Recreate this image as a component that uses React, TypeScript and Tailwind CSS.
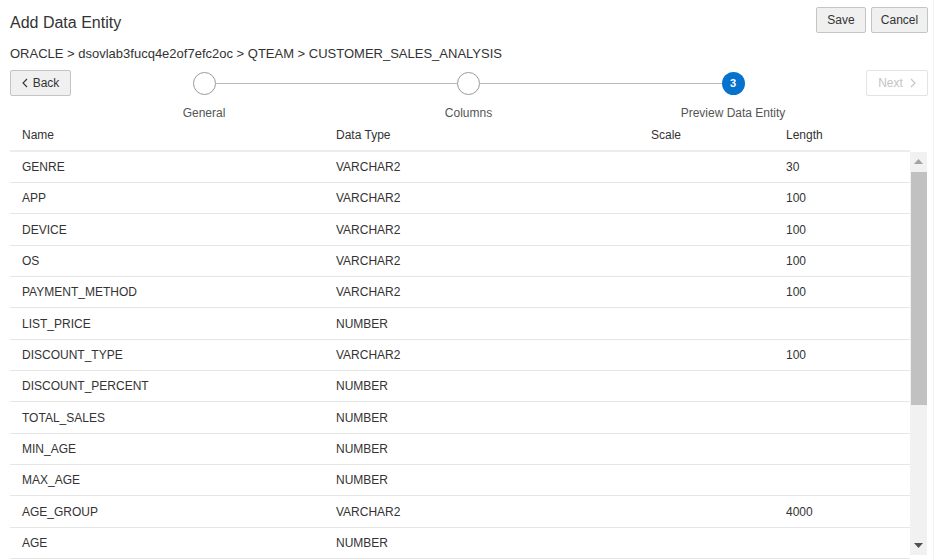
import React from 'react';

// Column preview rows for the data entity
interface ColumnRow {
  name: string;
  type: string;
  scale?: string;
  length?: string;
}

const rows: ColumnRow[] = [
  { name: 'GENRE', type: 'VARCHAR2', length: '30' },
  { name: 'APP', type: 'VARCHAR2', length: '100' },
  { name: 'DEVICE', type: 'VARCHAR2', length: '100' },
  { name: 'OS', type: 'VARCHAR2', length: '100' },
  { name: 'PAYMENT_METHOD', type: 'VARCHAR2', length: '100' },
  { name: 'LIST_PRICE', type: 'NUMBER' },
  { name: 'DISCOUNT_TYPE', type: 'VARCHAR2', length: '100' },
  { name: 'DISCOUNT_PERCENT', type: 'NUMBER' },
  { name: 'TOTAL_SALES', type: 'NUMBER' },
  { name: 'MIN_AGE', type: 'NUMBER' },
  { name: 'MAX_AGE', type: 'NUMBER' },
  { name: 'AGE_GROUP', type: 'VARCHAR2', length: '4000' },
  { name: 'AGE', type: 'NUMBER' },
];

const Chevron: React.FC<{ dir: 'left' | 'right'; className?: string }> = ({ dir, className }) => (
  <svg width="6" height="10" viewBox="0 0 6 10" className={className}>
    <path
      d={dir === 'left' ? 'M5 1 L1 5 L5 9' : 'M1 1 L5 5 L1 9'}
      fill="none"
      stroke="currentColor"
      strokeWidth="1.1"
    />
  </svg>
);

const Step: React.FC<{ label: string; num?: number; active?: boolean }> = ({ label, num, active }) => (
  <div className="relative flex flex-col items-center w-0">
    <div
      className={`w-[23px] h-[23px] rounded-full flex items-center justify-center shrink-0 ${
        active ? 'bg-[#0572ce] text-white text-[11px] font-bold' : 'bg-white border border-[#9a9a9a]'
      }`}
    >
      {active ? num : null}
    </div>
    <div className="absolute top-[32px] whitespace-nowrap text-[12px] text-[#555]">{label}</div>
  </div>
);

const App: React.FC = () => {
  return (
    <div
      className="w-[938px] h-[559px] bg-white text-[#333] overflow-hidden"
      style={{ fontFamily: '"Liberation Sans", Arial, sans-serif' }}
    >
      <div className="w-[934px] h-full border-r border-[#f3f3f3] flex flex-col">
        <div className="flex items-start justify-between pl-[10px] pr-[5px] pt-[7px]">
          <h1 className="text-[16px] text-[#333] mt-[7px] leading-[18px]">Add Data Entity</h1>
          <div className="flex gap-[5px]">
            <button className="h-[26px] w-[50px] text-[12px] bg-[#f0f0f0] border border-[#c4c4c4] rounded-[2px] text-[#333]">
              Save
            </button>
            <button className="h-[26px] w-[57px] text-[12px] bg-[#f0f0f0] border border-[#c4c4c4] rounded-[2px] text-[#333]">
              Cancel
            </button>
          </div>
        </div>

        <div className="pl-[10px] mt-[13px] text-[13px] leading-[16px] text-[#333]">
          ORACLE &gt; dsovlab3fucq4e2of7efc2oc &gt; QTEAM &gt; CUSTOMER_SALES_ANALYSIS
        </div>

        <div className="flex items-center pl-[10px] pr-[5px] mt-[8px] h-[26px]">
          <button className="h-[26px] w-[61px] flex items-center justify-center gap-[5px] text-[12px] bg-[#f0f0f0] border border-[#c4c4c4] rounded-[2px] text-[#333]">
            <Chevron dir="left" />
            Back
          </button>
          <div className="flex items-center ml-[133px] w-[529px]">
            <Step label="General" />
            <div className="flex-1 h-px bg-[#bbb] mx-[11.5px]" />
            <Step label="Columns" />
            <div className="flex-1 h-px bg-[#bbb] mx-[11.5px]" />
            <Step label="Preview Data Entity" num={3} active />
          </div>
          <div className="flex-1" />
          <button className="h-[26px] w-[62px] flex items-center justify-center gap-[7px] text-[12px] bg-white border border-[#e3e3e3] rounded-[2px] text-[#c4c4c4]">
            Next
            <Chevron dir="right" />
          </button>
        </div>

        <div className="flex mt-[30px] ml-[10px] text-[12px] text-[#333] h-[26px] items-start border-b-2 border-[#ececec] w-[900px]">
          <div className="w-[314px] pl-[12px]">Name</div>
          <div className="w-[315px] pl-[12px]">Data Type</div>
          <div className="w-[135px] pl-[12px]">Scale</div>
          <div className="pl-[12px]">Length</div>
        </div>

        <div className="flex w-[927px] pl-[10px]">
          <div className="flex-1 flex flex-col">
            {rows.map((r) => (
              <div
                key={r.name}
                className="flex items-center h-[31.33px] border-b border-[#e6e6e6] text-[12px] text-[#333] shrink-0"
              >
                <div className="w-[314px] pl-[12px]">{r.name}</div>
                <div className="w-[315px] pl-[12px]">{r.type}</div>
                <div className="w-[135px] pl-[12px]">{r.scale ?? ''}</div>
                <div className="pl-[12px]">{r.length ?? ''}</div>
              </div>
            ))}
          </div>
          <div className="w-[17px] bg-[#f1f1f1] flex flex-col items-center h-[403px]">
            <div className="h-[20px] flex items-center justify-center">
              <svg width="9" height="5" viewBox="0 0 9 5">
                <path d="M0 5 L4.5 0 L9 5 Z" fill="#a3a3a3" />
              </svg>
            </div>
            <div className="w-[16px] h-[233px] bg-[#c1c1c1]" />
            <div className="flex-1" />
            <div className="h-[18px] flex items-center justify-center">
              <svg width="9" height="5" viewBox="0 0 9 5">
                <path d="M0 0 L9 0 L4.5 5 Z" fill="#505050" />
              </svg>
            </div>
          </div>
        </div>
      </div>
    </div>
  );
};

export default App;
